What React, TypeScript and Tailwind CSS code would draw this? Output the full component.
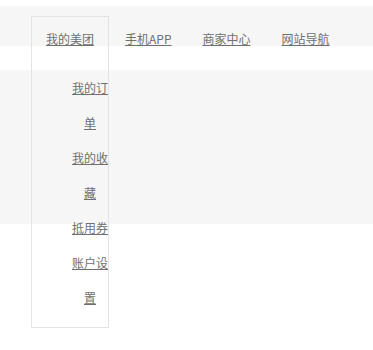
const nav = ["我的美团", "手机APP", "商家中心", "网站导航"];
const menu = ["我的订单", "我的收藏", "抵用券", "账户设置"];

export default function App() {
  return (
    <div
      className="min-h-[350px] bg-white pt-[6px] text-[12px] text-[#707070]"
      style={{ fontFamily: '"Noto Sans CJK SC", "Noto Sans", sans-serif' }}
    >
      <div className="relative h-[40px] bg-[#f6f6f6]">
        <ul className="flex pl-[30.5px] pt-[23px] leading-[20px]">
          {nav.map((n) => (
            <li key={n} className="px-[15.5px]">
              <a href="#" className="underline">
                {n}
              </a>
            </li>
          ))}
        </ul>
        <div className="absolute left-[31px] top-[10px] z-10 h-[312px] w-[78px] border border-[#e3e3e3]">
          <ul className="pl-[40px] pt-[53px] leading-[35px]">
            {menu.map((m) => (
              <li key={m} className="text-center">
                <a href="#" className="underline">
                  {m}
                </a>
              </li>
            ))}
          </ul>
        </div>
      </div>
      <div className="mt-[24px] h-[154px] bg-[#f6f6f6]" />
    </div>
  );
}
